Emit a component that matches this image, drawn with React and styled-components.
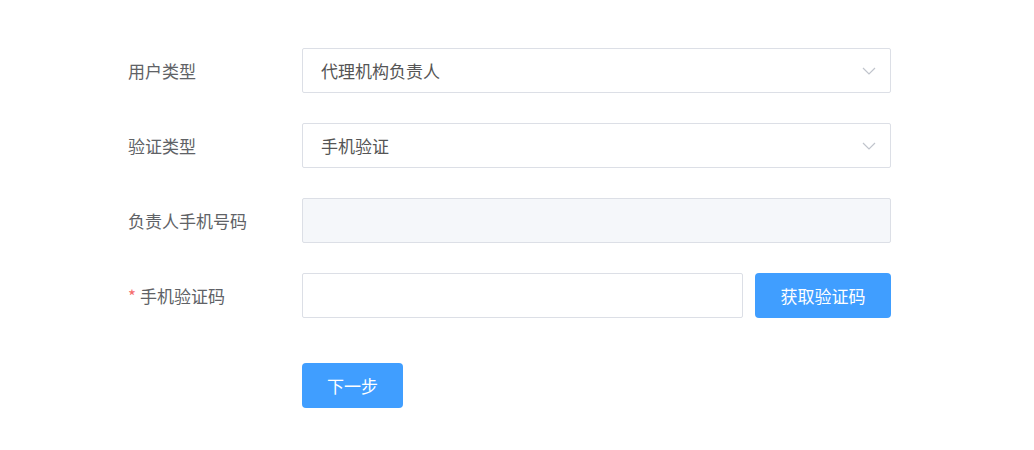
import React from "react"
import styled, { createGlobalStyle } from "styled-components"

const GlobalStyle = createGlobalStyle`
  html, body {
    margin: 0;
    background: #fff;
    font-family: "Noto Sans CJK SC", "Liberation Sans", sans-serif;
  }
`

const Page = styled.div`
  padding: 48px 0 0 128px;
`

const Form = styled.form`
  display: flex;
  flex-direction: column;
  gap: 30px;
  width: 763px;
`

const Row = styled.div`
  display: flex;
  align-items: center;
  height: 45px;
  margin-top: ${p => (p.$extra ? "15px" : "0")};
`

const Label = styled.label`
  width: 174px;
  flex: none;
  font-size: 17px;
  color: #606266;
  white-space: nowrap;
`

const Star = styled.span`
  color: #f56c6c;
  margin-right: 4px;
`

const Field = styled.div`
  flex: 1;
  display: flex;
  align-items: center;
  box-sizing: border-box;
  height: 45px;
  padding: 0 14px 0 18px;
  border: 1px solid #dcdfe6;
  border-radius: 2px;
  background: ${p => (p.$disabled ? "#f5f7fa" : "#fff")};
  font-size: 17px;
  color: #555;
`

const Value = styled.span`
  flex: 1;
`

const Button = styled.button`
  flex: none;
  height: 45px;
  width: ${p => p.$width};
  margin-left: ${p => p.$gap || "0"};
  border: none;
  border-radius: 4px;
  background: #409eff;
  color: #fff;
  font-family: inherit;
  font-size: 17px;
  padding: 0;
`

const Chevron = () => (
  <svg width="14" height="8" viewBox="0 0 14 8">
    <polyline points="1,1 7,7 13,1" fill="none" stroke="#c0c4cc" strokeWidth="1.2" />
  </svg>
)

export default function App() {
  return (
    <Page>
      <GlobalStyle />
      <Form>
        <Row>
          <Label>用户类型</Label>
          <Field>
            <Value>代理机构负责人</Value>
            <Chevron />
          </Field>
        </Row>
        <Row>
          <Label>验证类型</Label>
          <Field>
            <Value>手机验证</Value>
            <Chevron />
          </Field>
        </Row>
        <Row>
          <Label>负责人手机号码</Label>
          <Field $disabled />
        </Row>
        <Row>
          <Label>
            <Star>*</Star>手机验证码
          </Label>
          <Field />
          <Button type="button" $width="136px" $gap="12px">获取验证码</Button>
        </Row>
        <Row $extra>
          <Label />
          <Button type="button" $width="101px">下一步</Button>
        </Row>
      </Form>
    </Page>
  )
}
